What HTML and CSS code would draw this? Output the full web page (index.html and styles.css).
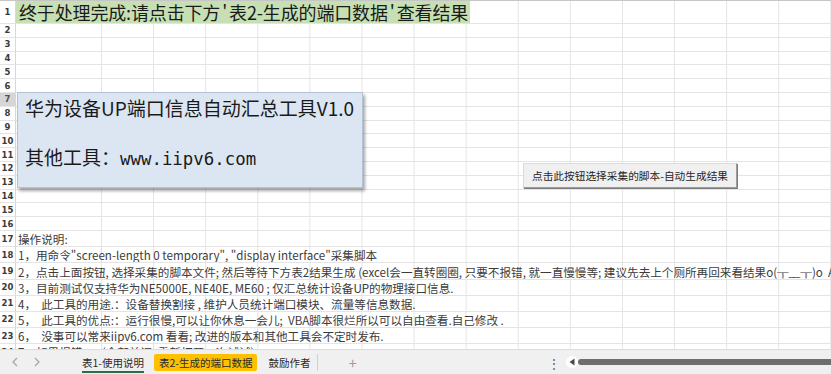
FILE: index.html
```html
<!DOCTYPE html>
<html lang="zh-CN">
<head>
    <meta charset="UTF-8">
    <meta name="viewport" content="width=device-width, initial-scale=1.0">
    <title>表1-使用说明</title>
    <link rel="stylesheet" href="styles.css">
</head>
<body>
<div class="app">
    <div class="sheet">
        <div class="row r-title"><div class="rh">1</div><div class="cells"><span class="title">终于处理完成:请点击下方<span class="q">'</span>表2-生成的端口数据<span class="q">'</span>查看结果</span></div></div>
        <div class="row"><div class="rh">2</div><div class="cells"></div></div>
        <div class="row"><div class="rh">3</div><div class="cells"></div></div>
        <div class="row"><div class="rh">4</div><div class="cells"></div></div>
        <div class="row"><div class="rh">5</div><div class="cells"></div></div>
        <div class="row"><div class="rh">6</div><div class="cells"></div></div>
        <div class="row"><div class="rh sel">7</div><div class="cells"></div></div>
        <div class="row"><div class="rh">8</div><div class="cells"></div></div>
        <div class="row"><div class="rh">9</div><div class="cells"></div></div>
        <div class="row"><div class="rh">10</div><div class="cells"></div></div>
        <div class="row"><div class="rh">11</div><div class="cells"></div></div>
        <div class="row"><div class="rh">12</div><div class="cells"></div></div>
        <div class="row"><div class="rh">13</div><div class="cells"></div></div>
        <div class="row"><div class="rh">14</div><div class="cells"></div></div>
        <div class="row"><div class="rh">15</div><div class="cells"></div></div>
        <div class="row"><div class="rh">16</div><div class="cells"></div></div>
        <div class="row r-text"><div class="rh">17</div><div class="cells">操作说明:</div></div>
        <div class="row r-text"><div class="rh">18</div><div class="cells">1，用命令"screen-length 0 temporary", "display interface"采集脚本</div></div>
        <div class="row r-text"><div class="rh">19</div><div class="cells">2，点击上面按钮, 选择采集的脚本文件; 然后等待下方表2结果生成 (excel会一直转圈圈, 只要不报错, 就一直慢慢等; 建议先去上个厕所再回来看结果o(╥﹏╥)o&nbsp; AV</div></div>
        <div class="row r-text"><div class="rh">20</div><div class="cells">3，目前测试仅支持华为NE5000E, NE40E, ME60 ; 仅汇总统计设备UP的物理接口信息.</div></div>
        <div class="row r-text"><div class="rh">21</div><div class="cells">4，&nbsp; 此工具的用途.：设备替换割接 , 维护人员统计端口模块、流量等信息数据.</div></div>
        <div class="row r-text"><div class="rh">22</div><div class="cells">5，&nbsp; 此工具的优点:：运行很慢,可以让你休息一会儿;&nbsp; VBA脚本很烂所以可以自由查看.自己修改 .</div></div>
        <div class="row r-text"><div class="rh">23</div><div class="cells">6，&nbsp; 没事可以常来iipv6.com 看看; 改进的版本和其他工具会不定时发布.</div></div>
        <div class="row r-text"><div class="rh">24</div><div class="cells">7，如果报错......(全部关闭, 重新打开一次试试)</div></div>

        <!-- floating shapes over the grid -->
        <div class="textbox">
            <p>华为设备UP端口信息自动汇总工具V1.0</p>
            <p class="second">其他工具：<span class="url">www.iipv6.com</span></p>
        </div>
        <button class="run">点击此按钮选择采集的脚本-自动生成结果</button>
    </div>

    <div class="tabbar">
        <span class="nav"><svg width="6" height="10" viewBox="0 0 6 10"><path d="M5 1L1 5l4 4" fill="none" stroke="#a3a3a3" stroke-width="1.2"/></svg></span>
        <span class="nav"><svg width="6" height="10" viewBox="0 0 6 10"><path d="M1 1l4 4-4 4" fill="none" stroke="#a3a3a3" stroke-width="1.2"/></svg></span>
        <span class="tab active">表1-使用说明</span>
        <span class="tab gold">表2-生成的端口数据</span>
        <span class="tab thanks">鼓励作者</span>
        <span class="add">+</span>
        <div class="hscroll">
            <span class="dots">⋮</span>
            <span class="left"><svg width="6" height="8" viewBox="0 0 6 8"><path d="M5.5 0.5v7L0.5 4z" fill="#4a4a4a"/></svg></span>
            <span class="thumb"></span>
        </div>
    </div>
</div>
</body>
</html>
```

FILE: styles.css
```css
body {
    margin: 0;
    padding: 0;
    background-color: #ffffff;
    font-family: "Noto Sans CJK SC", "Noto Sans", sans-serif;
    overflow: hidden;
}

.app {
    width: 831px;
    height: 374px;
    display: flex;
    flex-direction: column;
}

.sheet {
    position: relative;
    flex: 1;
    overflow: hidden;
    border-top: 1px solid #c6c6c6;
}

.row {
    display: flex;
    height: 13.8px;
    box-sizing: border-box;
}
.r-title {
    height: 23px;
}
.r-text {
    height: 16.2px;
}

/* row header */
.rh {
    width: 15px;
    flex: none;
    border-right: 1px solid #d8d8d8;
    border-bottom: 1px solid #e4e4e4;
    background-color: #ffffff;
    color: #3a3a3a;
    font-family: "DejaVu Sans", sans-serif;
    font-weight: bold;
    font-size: 8.5px;
    display: flex;
    align-items: center;
    justify-content: center;
    box-sizing: content-box;
}
.rh.sel {
    background-color: #d6d6d6;
    color: #505050;
}

/* cells area: column lines every 52px after a wide column A */
.cells {
    flex: 1;
    border-bottom: 1px solid #e4e4e4;
    background:
        linear-gradient(#ffffff, #ffffff) 0 0 / 85px 100% no-repeat,
        linear-gradient(to right, #e4e4e4 1px, transparent 1px) 85px 0 / 52.1px 100% repeat-x;
    white-space: nowrap;
    overflow: hidden;
    font-size: 11.6px;
    color: #3b3b3b;
    padding-left: 2px;
    display: flex;
    align-items: center;
}
.r-text .cells {
    align-items: flex-end;
    line-height: 13px;
}

.r-title .cells {
    padding-left: 0;
    align-items: stretch;
    overflow: visible;
}
.title {
    background-color: #c6e0b4;
    color: #1a1a1a;
    font-size: 18px;
    line-height: 21px;
    padding: 1px 2px 0 3px;
    letter-spacing: -0.15px;
}
.title .q {
    padding: 0 2px;
}

.textbox {
    position: absolute;
    left: 17px;
    top: 91px;
    width: 346px;
    height: 96px;
    box-sizing: border-box;
    background-color: #dce6f2;
    border: 1px solid #b4c2d5;
    box-shadow: 2px 3px 3px rgba(0, 0, 0, 0.35);
    padding: 3px 7px;
    font-size: 19px;
    color: #1a1a1a;
}
.textbox p {
    margin: 0;
    line-height: 24px;
    white-space: nowrap;
}
.textbox .second {
    margin-top: 25px;
}
.url {
    font-family: "DejaVu Sans Mono", monospace;
    font-size: 17.4px;
}

.run {
    position: absolute;
    left: 523px;
    top: 162px;
    width: 214px;
    height: 25px;
    padding: 0;
    background-color: #f0f0f0;
    border: 1px solid #dadada;
    border-right-color: #9b9b9b;
    border-bottom-color: #9b9b9b;
    box-shadow: 1px 1px 0 #7d7d7d;
    font-family: "Noto Sans CJK SC", sans-serif;
    font-size: 10.7px;
    color: #262626;
}

/* sheet tabs */
.tabbar {
    height: 25px;
    flex: none;
    box-sizing: border-box;
    border-top: 1px solid #dcdcdc;
    background-color: #f0f0f0;
    display: flex;
    align-items: center;
    padding-left: 4px;
    font-size: 10.5px;
    color: #2b2b2b;
}
.nav {
    width: 22px;
    display: flex;
    justify-content: center;
}
.tab {
    padding: 0 6px;
    height: 17px;
    line-height: 17px;
    box-sizing: border-box;
    white-space: nowrap;
}
.tab.active {
    margin-left: 34px;
    padding: 0;
    border-bottom: 2px solid #217346;
    height: 19px;
    margin-top: 2px;
}
.tab.gold {
    margin-left: 10px;
    background-color: #ffc000;
    border-radius: 2px;
    padding: 0 5px;
}
.tab.thanks {
    margin-left: 5px;
    padding: 0 7px 0 6px;
    border-right: 1px solid #d0d0d0;
}
.add {
    margin-left: 30px;
    font-size: 15px;
    color: #a0a0a0;
}
.hscroll {
    margin-left: auto;
    width: 283px;
    display: flex;
    align-items: center;
}
.dots {
    width: 10px;
    font-size: 12px;
    color: #555;
    text-align: center;
}
.left {
    margin-left: 8px;
    width: 12px;
    height: 12px;
    border-radius: 6px;
    background-color: #ffffff;
    display: flex;
    align-items: center;
    justify-content: center;
}
.thumb {
    flex: 1;
    height: 6px;
    border-radius: 3px 0 0 3px;
    background-color: #6e6e6e;
}
```
